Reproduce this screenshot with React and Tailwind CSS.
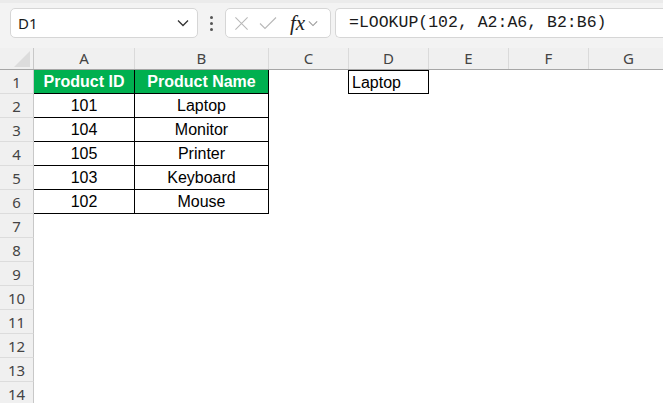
import React from "react";

const cols = [
  { key: "A", w: "w-[101px]" },
  { key: "B", w: "w-[134px]" },
  { key: "C", w: "w-[80px]" },
  { key: "D", w: "w-[80px]" },
  { key: "E", w: "w-[80px]" },
  { key: "F", w: "w-[80px]" },
  { key: "G", w: "w-[80px]" },
];

const products = [
  ["101", "Laptop"],
  ["104", "Monitor"],
  ["105", "Printer"],
  ["103", "Keyboard"],
  ["102", "Mouse"],
];

const Chevron = ({ className }) => (
  <svg viewBox="0 0 12 8" className={className} fill="none" stroke="currentColor" strokeWidth="1.3">
    <path d="M1 1.5 6 6.5 11 1.5" />
  </svg>
);

const Toolbar = () => (
  <div className="h-[48px] bg-[#f3f3f3] border-t-[3px] border-[#ebebeb] flex items-start pt-[5px] pl-[10px] gap-[4px]">
    {/* Name box */}
    <div className="w-[188px] h-[30px] bg-white border border-[#d6d6d6] rounded-[5px] flex items-center justify-between pl-[7px] pr-[8px]">
      <span className="text-[15px] text-[#1a1a1a]" style={{ fontFamily: '"Noto Sans", sans-serif' }}>D1</span>
      <Chevron className="w-[12px] h-[8px] text-[#333]" />
    </div>

    {/* dots */}
    <div className="w-[19px] h-[30px] flex flex-col items-center justify-center gap-[3px]">
      <span className="w-[3px] h-[3px] bg-[#555] rounded-full" />
      <span className="w-[3px] h-[3px] bg-[#555] rounded-full" />
      <span className="w-[3px] h-[3px] bg-[#555] rounded-full" />
    </div>

    {/* fx box */}
    <div className="w-[106px] h-[30px] bg-white border border-[#d6d6d6] rounded-[5px] flex items-center pl-[8px] gap-[10px]">
      <svg viewBox="0 0 16 16" className="w-[15px] h-[15px] text-[#b8b8b8]" fill="none" stroke="currentColor" strokeWidth="1.1">
        <path d="M1.5 1.5 14.5 14.5M14.5 1.5 1.5 14.5" />
      </svg>
      <svg viewBox="0 0 18 14" className="w-[18px] h-[14px] text-[#b8b8b8]" fill="none" stroke="currentColor" strokeWidth="1.1">
        <path d="M1 7.5 6 12.5 17 1.5" />
      </svg>
      <span className="text-[21px] italic text-[#222] leading-none ml-[3px]" style={{ fontFamily: '"Liberation Serif", serif' }}>fx</span>
      <Chevron className="w-[10px] h-[7px] text-[#999] -ml-[7px]" />
    </div>

    {/* formula bar */}
    <div className="flex-1 h-[30px] bg-white border border-[#d6d6d6] border-r-0 rounded-l-[5px] flex items-center pl-[13px]">
      <span className="text-[16.5px] text-[#1a1a1a]" style={{ fontFamily: '"Liberation Mono", monospace' }}>
        =LOOKUP(102, A2:A6, B2:B6)
      </span>
    </div>
  </div>
);

const HeaderRow = () => (
  <div className="flex h-[22px] bg-[#f0f0f0] border-b border-[#a6a6a6]" style={{ fontFamily: '"Noto Sans", sans-serif' }}>
    <div className="w-[34px] shrink-0 border-r border-[#c8c8c8] relative">
      <div className="absolute right-[3px] bottom-[2px] w-0 h-0 border-l-[16px] border-l-transparent border-b-[16px] border-b-[#dcdcdc]" />
    </div>
    {cols.map((c) => (
      <div key={c.key} className={`${c.w} shrink-0 border-r border-[#dadada] flex items-center justify-center text-[15px] text-[#444]`}>
        {c.key}
      </div>
    ))}
  </div>
);

const RowHead = ({ n }) => (
  <div className="w-[34px] shrink-0 h-[24px] bg-[#f0f0f0] border-r border-[#c8c8c8] border-b border-b-[#dcdcdc] flex items-center justify-center pt-[1px] text-[15px] text-[#444]" style={{ fontFamily: '"Noto Sans", sans-serif' }}>
    {n}
  </div>
);

const Row = ({ n }) => {
  const cellFont = { fontFamily: '"Liberation Sans", sans-serif' };
  let a = null;
  let b = null;
  if (n === 1) {
    a = (
      <div className="w-[101px] shrink-0 h-[24px] bg-[#00b050] border-r border-b border-black flex items-center justify-center text-white font-bold text-[16px]" style={cellFont}>
        Product ID
      </div>
    );
    b = (
      <div className="w-[134px] shrink-0 h-[24px] bg-[#00b050] border-r border-b border-black flex items-center justify-center text-white font-bold text-[16px]" style={cellFont}>
        Product Name
      </div>
    );
  } else if (n <= 6) {
    const [id, name] = products[n - 2];
    a = (
      <div className="w-[101px] shrink-0 h-[24px] border-r border-b border-black flex items-center justify-center text-black text-[16px]" style={cellFont}>
        {id}
      </div>
    );
    b = (
      <div className="w-[134px] shrink-0 h-[24px] border-r border-b border-black flex items-center justify-center text-black text-[16px]" style={cellFont}>
        {name}
      </div>
    );
  } else {
    a = <div className="w-[101px] shrink-0 h-[24px]" />;
    b = <div className="w-[134px] shrink-0 h-[24px]" />;
  }

  return (
    <div className="flex h-[24px]">
      <RowHead n={n} />
      {a}
      {b}
      <div className="w-[79px] shrink-0" />
      {n === 1 ? (
        <div className="w-[81px] shrink-0 h-[24px] border border-black flex items-center pl-[3px] pt-[1px] text-[16px] text-black" style={cellFont}>
          Laptop
        </div>
      ) : (
        <div className="w-[81px] shrink-0" />
      )}
      <div className="w-[80px] shrink-0" />
      <div className="w-[80px] shrink-0" />
      <div className="w-[80px] shrink-0" />
    </div>
  );
};

export default function App() {
  const rows = Array.from({ length: 14 }, (_, i) => i + 1);
  return (
    <div className="w-[663px] h-[403px] overflow-hidden bg-white">
      <Toolbar />
      <div className="w-[720px]">
        <HeaderRow />
        {rows.map((n) => (
          <Row key={n} n={n} />
        ))}
      </div>
    </div>
  );
}
